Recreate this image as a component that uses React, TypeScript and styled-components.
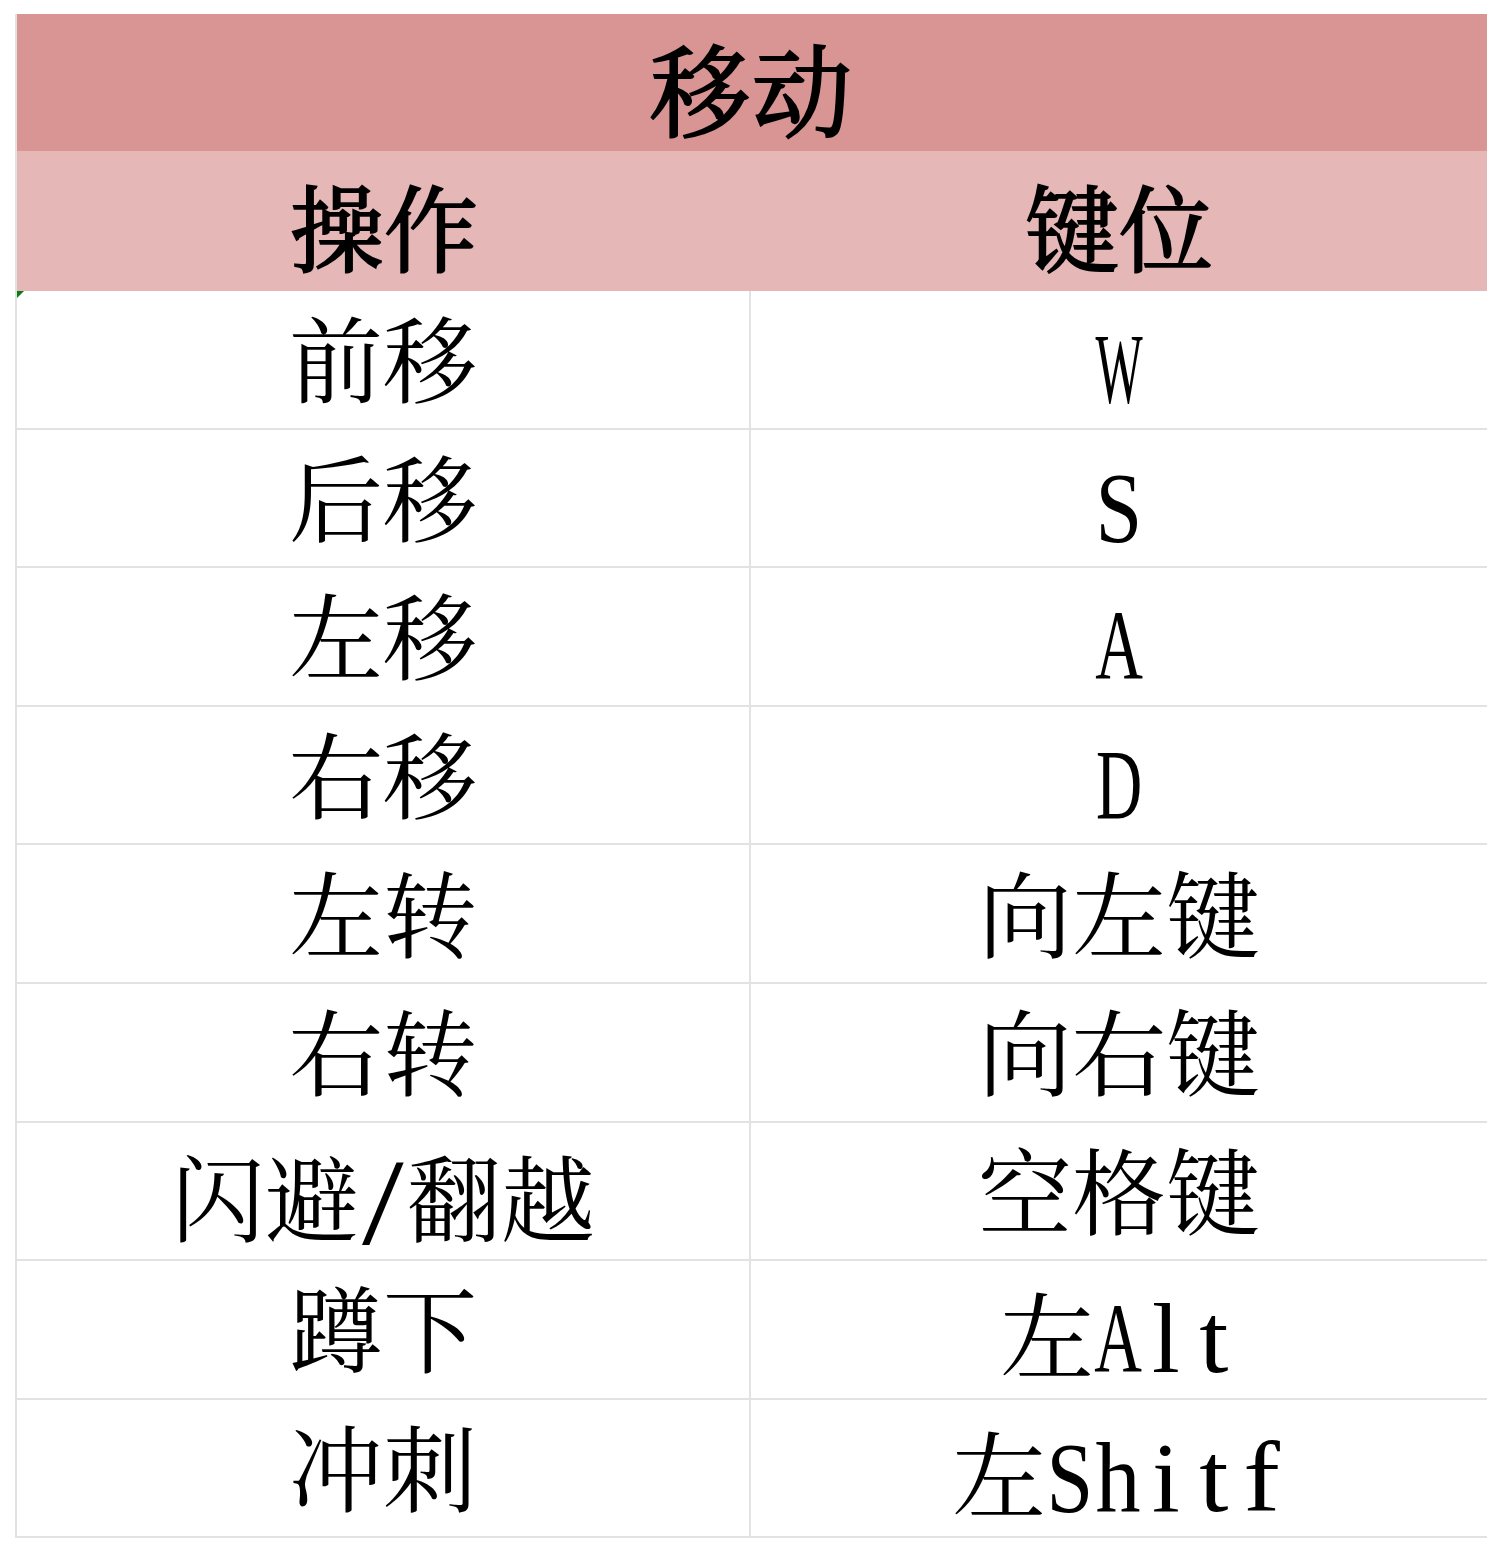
import React from "react";
import styled, { createGlobalStyle } from "styled-components";

const Global = createGlobalStyle`
  html, body { margin: 0; padding: 0; background: #ffffff; }
  body { width: 1500px; height: 1554px; overflow: hidden; }
`;

const CJK = `"Noto Serif CJK SC", "Noto Sans CJK SC", serif`;

const Sheet = styled.div`
  width: 1470px;
  margin: 14px 0 0 15px;
  display: grid;
  grid-template-columns: 734px 736px;
  grid-template-rows: 137px 140px repeat(9, 138.6px);
  border-left: 2px solid #e2e2e2;
  border-right: 2px solid #e2e2e2;
  box-sizing: border-box;
  color: #000;
`;

const Title = styled.div`
  grid-column: 1 / span 2;
  background: #d99594;
  display: flex;
  align-items: center;
  justify-content: center;
  font-family: ${CJK};
  font-weight: 400;
  -webkit-text-stroke: 2.2px #000;
  font-size: 100px;
  line-height: 1;
  letter-spacing: 2px;
  padding-top: 6px;
  color: #000;
`;

const Head = styled.div`
  background: #e5b7b7;
  display: flex;
  align-items: center;
  justify-content: center;
  font-family: ${CJK};
  font-weight: 400;
  -webkit-text-stroke: 2px #000;
  font-size: 94px;
  line-height: 1;
  padding-top: 8px;
  color: #000;
`;

const Cell = styled.div<{ $left?: boolean; $shift?: number }>`
  position: relative;
  background: #fff;
  display: flex;
  align-items: center;
  justify-content: center;
  font-family: ${CJK};
  font-weight: 400;
  font-size: 94px;
  line-height: 1;
  border-bottom: 2px solid #e2e2e2;
  border-right: ${(p) => (p.$left ? "2px solid #e2e2e2" : "none")};
  box-sizing: border-box;
  padding-top: ${(p) => 2 * (p.$shift ?? 0)}px;
  padding-bottom: 6px;
  color: #000;
`;

const Flag = styled.span`
  position: absolute;
  left: 0;
  top: 0;
  width: 0;
  height: 0;
  border-top: 7px solid #0a7a1a;
  border-right: 7px solid transparent;
`;

const Glyph = styled.span`
  display: inline-flex;
  justify-content: center;
  width: 48px;
  font-family: "Liberation Serif", "Times New Roman", serif;
  font-size: 100px;
  line-height: 0.8;
  vertical-align: baseline;
`;

const Ink = styled.span<{ $sx: number; $sy: number; $dy: number }>`
  display: inline-block;
  transform: translateY(${(p) => p.$dy}px) scale(${(p) => p.$sx}, ${(p) => p.$sy});
`;

const SCALE: Record<string, [number, number, number]> = {
  W: [0.5, 1, 0],
  S: [0.84, 1, 0],
  A: [0.66, 1, 0],
  D: [0.64, 1, 0],
  l: [1, 1, 0],
  t: [1.05, 1, 0],
  h: [0.9, 1, 0],
  i: [1, 1, 0],
  f: [1.1, 1, 0],
  "/": [1.5, 1.22, 2],
};

const Latin: React.FC<{ text: string }> = ({ text }) => (
  <>
    {text.split("").map((c, i) => {
      const [sx, sy, dy] = SCALE[c] ?? [1, 1, 0];
      return (
        <Glyph key={i}>
          <Ink $sx={sx} $sy={sy} $dy={dy}>
            {c}
          </Ink>
        </Glyph>
      );
    })}
  </>
);

type Part = { t: string; latin?: boolean };
const rows: { op: Part[]; key: Part[] }[] = [
  { op: [{ t: "前移" }], key: [{ t: "W", latin: true }] },
  { op: [{ t: "后移" }], key: [{ t: "S", latin: true }] },
  { op: [{ t: "左移" }], key: [{ t: "A", latin: true }] },
  { op: [{ t: "右移" }], key: [{ t: "D", latin: true }] },
  { op: [{ t: "左转" }], key: [{ t: "向左键" }] },
  { op: [{ t: "右转" }], key: [{ t: "向右键" }] },
  { op: [{ t: "闪避" }, { t: "/", latin: true }, { t: "翻越" }], key: [{ t: "空格键" }] },
  { op: [{ t: "蹲下" }], key: [{ t: "左" }, { t: "Alt", latin: true }] },
  { op: [{ t: "冲刺" }], key: [{ t: "左" }, { t: "Shitf", latin: true }] },
];

const hasLatin = (parts: Part[]) => parts.some((p) => p.latin);

const Text: React.FC<{ parts: Part[] }> = ({ parts }) => (
  <span>
    {parts.map((p, j) =>
      p.latin ? <Latin key={j} text={p.t} /> : <React.Fragment key={j}>{p.t}</React.Fragment>
    )}
  </span>
);

export default function App() {
  return (
    <>
      <Global />
      <Sheet>
        <Title>移动</Title>
        <Head>操作</Head>
        <Head>键位</Head>
        {rows.map((r, i) => (
          <React.Fragment key={i}>
            <Cell $left $shift={hasLatin(r.op) ? 7 : 0}>
              {i === 0 && <Flag />}
              <Text parts={r.op} />
            </Cell>
            <Cell $shift={hasLatin(r.key) ? 6 : 0}>
              <Text parts={r.key} />
            </Cell>
          </React.Fragment>
        ))}
      </Sheet>
    </>
  );
}
